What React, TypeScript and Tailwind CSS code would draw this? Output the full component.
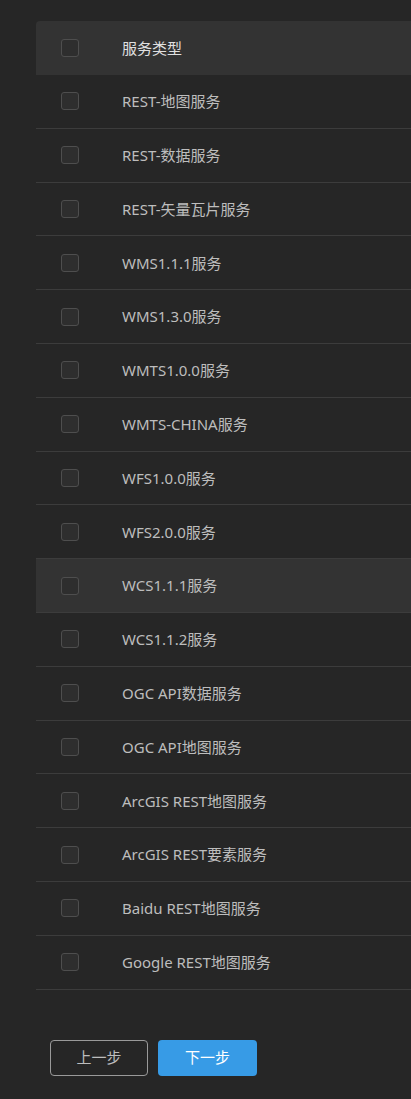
import React, { useState } from 'react'

const services = [
  'REST-地图服务',
  'REST-数据服务',
  'REST-矢量瓦片服务',
  'WMS1.1.1服务',
  'WMS1.3.0服务',
  'WMTS1.0.0服务',
  'WMTS-CHINA服务',
  'WFS1.0.0服务',
  'WFS2.0.0服务',
  'WCS1.1.1服务',
  'WCS1.1.2服务',
  'OGC API数据服务',
  'OGC API地图服务',
  'ArcGIS REST地图服务',
  'ArcGIS REST要素服务',
  'Baidu REST地图服务',
  'Google REST地图服务'
]

const font = { fontFamily: '"Noto Sans", "Noto Sans CJK SC", sans-serif' }

function Box({ checked, onClick }: { checked: boolean; onClick: () => void }) {
  return (
    <button
      onClick={onClick}
      className={`w-[18px] h-[18px] rounded-[3px] border shrink-0 ${checked ? 'bg-[#3a9be3] border-[#3a9be3]' : 'bg-[#2e2e2e] border-[#4e4e4e]'}`}
    />
  )
}

export default function App() {
  const [sel, setSel] = useState<string[]>([])
  const [hover, setHover] = useState<string | null>('WCS1.1.1服务')
  const toggle = (s: string) => setSel(sel.includes(s) ? sel.filter(x => x !== s) : [...sel, s])
  const all = sel.length === services.length
  return (
    <div className="min-h-[1099px] w-[411px] bg-[#262626] overflow-hidden" style={font}>
      <div className="pt-[21px] pl-[36px]">
        <div className="flex items-center h-[54px] bg-[#333333] rounded-tl-[4px] pl-[25px]">
          <Box checked={all} onClick={() => setSel(all ? [] : services)} />
          <span className="ml-[43px] text-[15px] text-[#e0e0e0]">服务类型</span>
        </div>
        {services.map(s => (
          <div
            key={s}
            onMouseEnter={() => setHover(s)}
            className={`flex items-center h-[53.8px] border-b border-[#3c3c3c] pl-[25px] ${hover === s ? 'bg-[#333333]' : ''}`}
          >
            <Box checked={sel.includes(s)} onClick={() => toggle(s)} />
            <span className="ml-[43px] text-[15px] text-[#bdbdbd]">{s}</span>
          </div>
        ))}
      </div>
      <div className="flex gap-[10px] pl-[50px] mt-[50px]">
        <button className="w-[98px] h-[36px] rounded-[4px] border border-[#9a9a9a] text-[15px] text-[#bdbdbd]">上一步</button>
        <button className="w-[99px] h-[36px] rounded-[4px] bg-[#379be6] text-[15px] text-white">下一步</button>
      </div>
    </div>
  )
}
